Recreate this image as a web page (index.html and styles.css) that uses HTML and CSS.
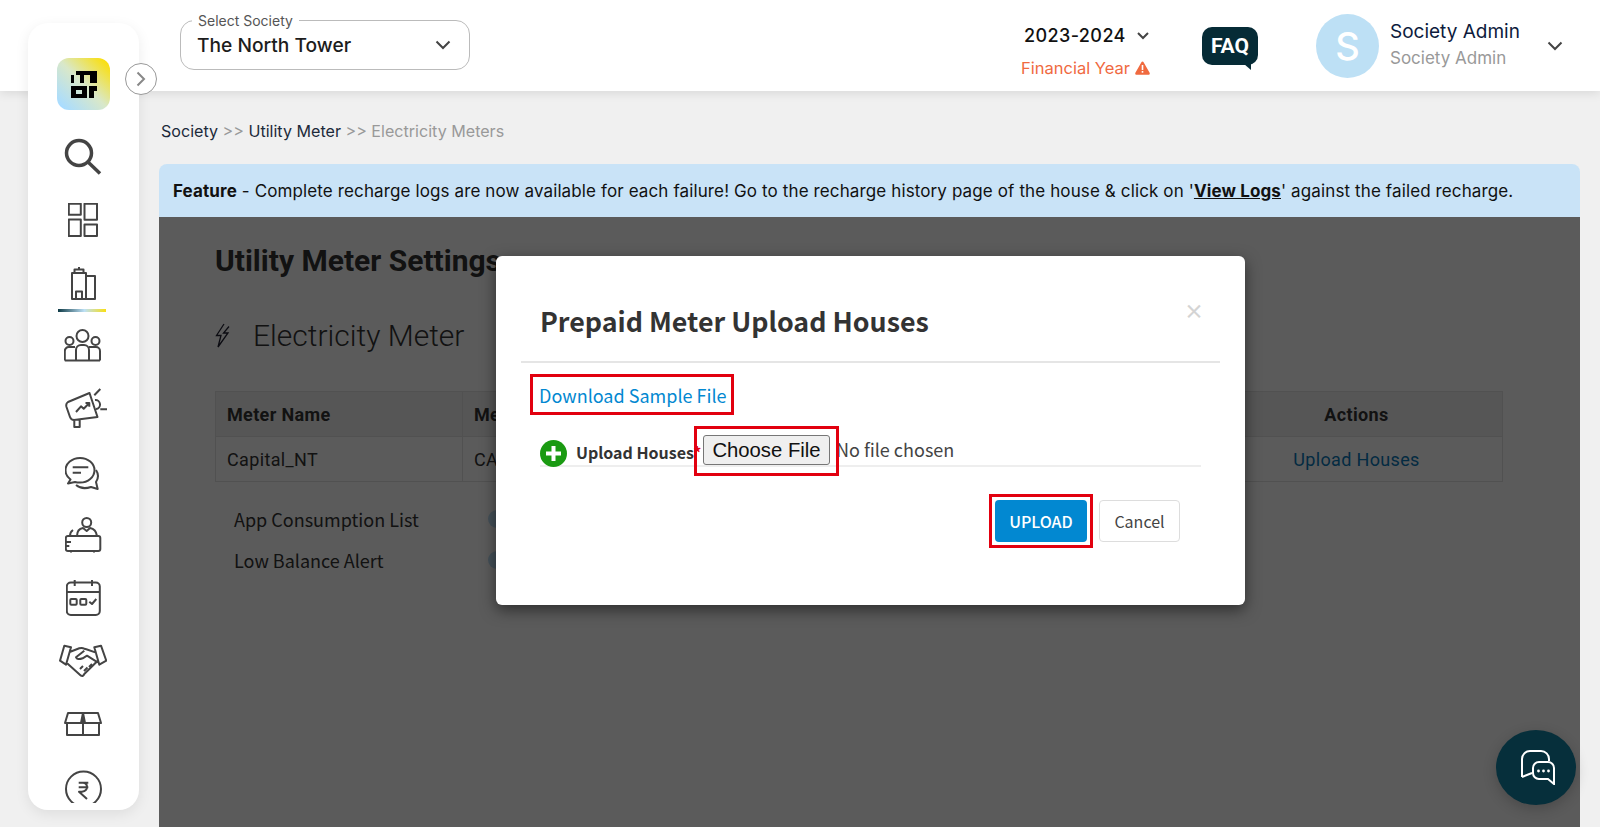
FILE: index.html
```html
<!DOCTYPE html>
<html lang="en">
<head>
    <meta charset="UTF-8">
    <meta name="viewport" content="width=device-width, initial-scale=1.0">
    <title>Electricity Meters</title>
    <link rel="stylesheet" href="styles.css">
</head>
<body>
    <div class="app">
        <!-- top bar -->
        <header class="topbar">
            <div class="society-select">
                <span class="society-label">Select Society</span>
                <span class="society-value">The North Tower</span>
                <svg class="chevron" width="16" height="10" viewBox="0 0 16 10"><path d="M1.5 1.5 8 8l6.5-6.5"/></svg>
            </div>
            <div class="year-box">
                <div class="year-value">2023-2024
                    <svg class="chevron" width="12" height="8" viewBox="0 0 12 8"><path d="M1 1l5 5 5-5"/></svg>
                </div>
                <div class="year-note">Financial Year
                    <svg width="15" height="14" viewBox="0 0 15 14"><path class="warn" d="M7.5.5c.5 0 .9.3 1.1.7l6 10.6c.5.9-.1 2-1.100 2H1.500c-1 0-1.600-1.100-1.100-2l6-10.600c.2-.4.600-.7 1.100-.7z"/><rect x="6.700" y="4" width="1.600" height="5" fill="#fff"/><rect x="6.700" y="10" width="1.600" height="1.700" fill="#fff"/></svg>
                </div>
            </div>
            <div class="faq">FAQ</div>
            <div class="user">
                <div class="avatar">S</div>
                <div class="user-text">
                    <div class="user-name">Society Admin</div>
                    <div class="user-role">Society Admin</div>
                </div>
                <svg class="chevron" width="16" height="10" viewBox="0 0 16 10"><path d="M1.500 1.500 8 8l6.500-6.500"/></svg>
            </div>
        </header>

        <!-- side menu -->
        <aside class="sidebar">
            <div class="logo">
                <svg width="26" height="27" viewBox="0 0 26 27">
                    <rect x="0" y="4" width="3" height="8"/>
                    <rect x="5" y="0" width="21" height="4"/>
                    <rect x="9" y="4" width="4" height="8"/>
                    <rect x="19" y="4" width="7" height="8"/>
                    <path fill-rule="evenodd" d="M0 15h16v12H0zM5 19v4h6v-4z"/>
                    <path d="M18 15h8v5h-3v7h-5z"/>
                </svg>
            </div>
            <button class="side-toggle">
                <svg width="10" height="16" viewBox="0 0 10 16"><path d="M1.500 1.500 8 8l-6.500 6.500"/></svg>
            </button>
            <ul class="side-menu">
                <li><svg class="heavy" width="38" height="37" viewBox="0 0 38 37"><circle cx="15" cy="15" r="12.500"/><path d="M24 24l12 11.500"/></svg></li>
                <li><svg width="30" height="34" viewBox="0 0 30 34"><rect x=".8" y=".8" width="12" height="11"/><rect x="16.500" y=".8" width="12.500" height="16"/><rect x=".8" y="16.500" width="12" height="16.500"/><rect x="16.500" y="21.500" width="12.500" height="11.500"/></svg></li>
                <li class="active"><svg width="25" height="36" viewBox="0 0 25 36"><path d="M1 8h14v26H1zM3.500 8V4.500h9V8M8 4.500V2M15 11h9v23h-9M5 34v-7.500h6V34"/></svg></li>
                <li><svg width="38" height="33" viewBox="0 0 38 33"><circle cx="18.500" cy="7" r="6"/><circle cx="5.500" cy="12" r="4"/><circle cx="31.500" cy="12" r="4"/><path d="M.8 31.500V22a4 4 0 0 1 4-4H11M12 31.500V21a5 5 0 0 1 5-5h3a5 5 0 0 1 5 5v10.500M25 18h7a4 4 0 0 1 4 4v9.500M.8 31.500H36"/></svg></li>
                <li class="shift-right"><svg width="43" height="41" viewBox="0 0 43 41"><path d="M3 14L24.500 5l8 24L9 32q-3 0-4-3L1.500 19Q.5 15.500 3 14zM9.300 32.300V39h5.400v-7.300M11 24l5-5.700 2.700 2.400L24.300 15M20.500 15h3.800v3.800M30 12a4.500 4.500 0 0 1 1 9M29.300 7.300 35.300 1M35.300 21.300H42"/></svg></li>
                <li class="nudge"><svg width="36" height="35" viewBox="0 0 36 35"><path d="M15 1C7 1 .5 6.500.5 13.300c0 3.800 2 7 5 9.200L3 26.500l7-1.500c1.500.4 3.200.6 5 .6 8 0 14.500-5.500 14.500-12.300S23 1 15 1z"/><path d="M7.700 10.300h15.600M7.700 15.700H16M31 13q4 6 0 12l1.700 7-6.700-2q-9 3-15-2"/></svg></li>
                <li><svg width="37" height="36" viewBox="0 0 37 36"><circle cx="21.700" cy="5.500" r="4.500"/><path d="M12 19q0-7 6-8l3.700 3 3.300-3q6 1 7 8M5 19q0-4 3-6"/><rect x=".8" y="19" width="34.500" height="15" rx="2"/><path d="M.8 25H6M.8 29h3.500M6 34v1.500M29 34v1.500"/></svg></li>
                <li><svg width="35" height="37" viewBox="0 0 35 37"><rect x=".8" y="3.500" width="33" height="32.500" rx="4"/><path d="M.8 13h33M8.700 1v6M26 1v6M23.300 22.700l2.700 2.300 4.300-5"/><rect x="4.300" y="20" width="6.400" height="5.700" rx="1"/><rect x="14.300" y="20" width="6" height="5.700" rx="1"/></svg></li>
                <li><svg width="48" height="34" viewBox="0 0 48 34"><path d="M5.300 1.700 12 3.300 7 20.700 1 16.700zM42 1.700l-6.700 1.600 5 17.400 7-4zM11.300 7.700l9-3.400q3-1 5 .4l2 .6 9.700 3.300M7 18.300l15 13.400q2 1 3.300-1.700L38.700 16.700M25.300 6.700 17 13.300q1 3 6.700 1L28 11.700l10.700 6.600M21 25l3-3M25 27l3.500-3.500M30 23l3-3"/></svg></li>
                <li><svg width="38" height="24" viewBox="0 0 38 24"><path d="M1 11 4 1h30l3 10zM3 11v12h32V11M19 1v22"/><path class="fill" d="M19 1l-2 10h4z"/></svg></li>
                <li><svg width="37" height="33" viewBox="0 0 37 33"><circle cx="18.500" cy="19" r="17.500"/><path d="M13.700 12.700h9.600M13.700 17.300h9.600M13.700 12.700H18q4 .3 4 4.300t-5 4.700h-3l8 7.300"/></svg></li>
            </ul>
        </aside>

        <main class="content">
            <div class="breadcrumb">
                <span class="crumb">Society</span> &gt;&gt; <span class="crumb">Utility Meter</span> &gt;&gt; Electricity Meters
            </div>
            <div class="feature">
                <b>Feature</b> - Complete recharge logs are now available for each failure! Go to the recharge history page of the house &amp; click on '<a href="#">View Logs</a>' against the failed recharge.
            </div>

            <section class="panel">
                <h1>Utility Meter Settings</h1>
                <h2>
                    <svg width="16" height="25" viewBox="0 0 16 25"><path d="M9 1 1.500 12.500H6L3 24l10-14H8.500L14 3.500"/></svg>
                    Electricity Meter
                </h2>
                <table>
                    <colgroup><col class="col-name"><col><col class="col-actions"></colgroup>
                    <thead>
                        <tr><th>Meter Name</th><th>Meter Type</th><th class="center">Actions</th></tr>
                    </thead>
                    <tbody>
                        <tr><td>Capital_NT</td><td>CAPITAL</td><td class="center"><a href="#">Upload Houses</a></td></tr>
                    </tbody>
                </table>
                <div class="setting"><span>App Consumption List</span><i class="switch"></i></div>
                <div class="setting"><span>Low Balance Alert</span><i class="switch"></i></div>

                <!-- upload dialog -->
                <div class="backdrop">
                    <div class="modal">
                        <div class="modal-head">
                            <h3>Prepaid Meter Upload Houses</h3>
                            <span class="close">&times;</span>
                        </div>
                        <div class="modal-body">
                            <a href="#" class="sample-link mark">Download Sample File</a>
                            <div class="file-row">
                                <span class="plus">
                                    <svg width="15" height="15" viewBox="0 0 15 15"><path d="M5.500 0h4v5.500H15v4H9.500V15h-4V9.500H0v-4h5.500z"/></svg>
                                </span>
                                <span class="file-label">Upload Houses<em>*</em></span>
                                <button class="file-btn mark">Choose File</button>
                                <span class="file-name">No file chosen</span>
                            </div>
                            <div class="modal-actions">
                                <button class="btn-upload mark">UPLOAD</button>
                                <button class="btn-cancel">Cancel</button>
                            </div>
                        </div>
                    </div>
                </div>
            </section>
        </main>

        <button class="chat-fab">
            <svg width="36" height="35" viewBox="0 0 36 35">
                <path d="M1 27V9a8 8 0 0 1 8-8h11a8 8 0 0 1 8 8v2M1 27l10-4"/>
                <path d="M18 12h9a6 6 0 0 1 6 6v16l-6-5h-9a6 6 0 0 1-6-6v-5a6 6 0 0 1 6-6z"/>
                <circle class="dot" cx="17.500" cy="21" r="1.400"/><circle class="dot" cx="22.500" cy="21" r="1.400"/><circle class="dot" cx="27.500" cy="21" r="1.400"/>
            </svg>
        </button>
    </div>
</body>
</html>
```

FILE: styles.css
```css
* {
    box-sizing: border-box;
}

body {
    margin: 0;
    background: #f0f0f0;
    font-family: Inter, "Liberation Sans", sans-serif;
    color: #222;
    overflow: hidden;
}

.app {
    display: grid;
    grid-template-columns: 159px 1fr;
    grid-template-rows: 91px 736px;
    height: 827px;
    position: relative;
}

/* top bar */
.topbar {
    grid-column: 1 / -1;
    grid-row: 1;
    display: flex;
    align-items: center;
    padding-left: 180px;
    background: #fff;
    box-shadow: 0 2px 10px rgba(0, 0, 0, 0.1);
}

.chevron path,
.side-toggle path {
    fill: none;
    stroke: #444;
    stroke-width: 2;
}

.society-select {
    position: relative;
    display: flex;
    align-items: center;
    justify-content: space-between;
    width: 290px;
    height: 50px;
    margin-top: -1px;
    padding: 0 18px 0 16px;
    border: 1px solid #bbb;
    border-radius: 14px;
}

.society-label {
    position: absolute;
    top: -9px;
    left: 11px;
    padding: 0 6px;
    background: #fff;
    font-size: 14px;
    line-height: 17px;
    color: #555;
}

.society-value {
    font-size: 19.200px;
    font-weight: 500;
    color: #1c1c1c;
}

.year-box {
    flex: none;
    width: 130px;
    margin: 11px 0 0 551px;
}

.year-value {
    display: flex;
    align-items: center;
    gap: 11px;
    padding-left: 3px;
    font-size: 18px;
    line-height: 22px;
    font-weight: 500;
    letter-spacing: 0.4px;
    color: #111;
    white-space: nowrap;
}

.year-note {
    display: flex;
    align-items: center;
    gap: 5px;
    margin-top: 11px;
    font-size: 16.500px;
    line-height: 20px;
    color: #f06a3f;
    white-space: nowrap;
}

.warn {
    fill: #f06a3f;
}

.faq {
    position: relative;
    flex: none;
    width: 56px;
    height: 38px;
    margin-left: 51px;
    margin-top: 1px;
    border-radius: 10px;
    background: #062b36;
    color: #fff;
    font-family: Roboto, sans-serif;
    font-weight: 700;
    font-size: 21px;
    line-height: 38px;
    text-align: center;
}

.faq::after {
    content: "";
    position: absolute;
    right: 7px;
    bottom: -5px;
    border-top: 6px solid #062b36;
    border-left: 7px solid transparent;
}

.user {
    display: flex;
    align-items: center;
    margin-left: 58px;
}

.avatar {
    width: 63px;
    height: 64px;
    border-radius: 50%;
    background: #bde0f5;
    color: #fff;
    font-size: 38px;
    font-weight: 500;
    line-height: 64px;
    text-align: center;
}

.user-text {
    width: 168px;
    padding: 0 0 4px 11px;
}

.user-name {
    font-size: 19px;
    color: #0d1b3d;
}

.user-role {
    margin-top: 5px;
    font-size: 17px;
    color: #999;
}

/* side menu */
.sidebar {
    grid-column: 1;
    grid-row: 1 / 3;
    position: relative;
    width: 111px;
    height: 787px;
    margin: 23px 0 0 28px;
    padding-top: 35px;
    background: #fff;
    border-radius: 20px;
    box-shadow: 0 4px 14px rgba(0, 0, 0, 0.08);
}

.logo {
    display: flex;
    align-items: center;
    justify-content: center;
    width: 53px;
    height: 52px;
    margin: 0 0 15px 29px;
    border-radius: 12px;
    background: linear-gradient(45deg, #a9dcff 8%, #d9e8c9 50%, #f9df12 92%);
}

.side-toggle {
    position: absolute;
    top: 40px;
    left: 97px;
    display: flex;
    align-items: center;
    justify-content: center;
    width: 32px;
    height: 32px;
    padding: 0;
    border: 1px solid #999;
    border-radius: 50%;
    background: #fff;
}

.side-toggle path {
    stroke: #888;
}

.side-menu {
    list-style: none;
    margin: 0;
    padding: 0;
}

.side-menu li {
    position: relative;
    display: flex;
    align-items: center;
    justify-content: center;
    height: 63px;
    padding-right: 1px;
}

.side-menu li.shift-right {
    padding-left: 6px;
}

.side-menu li.nudge {
    padding-top: 5px;
}

.side-menu svg {
    fill: none;
    stroke: #444;
    stroke-width: 2;
    stroke-linejoin: round;
}

.side-menu svg.heavy {
    stroke-width: 3.500;
}

.side-menu svg .fill {
    fill: #444;
}

.side-menu li.active::after {
    content: "";
    position: absolute;
    left: 30px;
    bottom: 2px;
    width: 48px;
    height: 3px;
    background: linear-gradient(90deg, #0d3a46, #bde0f5 55%, #f9df12);
}

/* page */
.content {
    grid-column: 2;
    grid-row: 2;
    display: flex;
    flex-direction: column;
    padding-right: 20px;
    min-width: 0;
}

.breadcrumb {
    padding: 30px 0 0 2px;
    height: 73px;
    font-size: 16.100px;
    line-height: 20px;
    color: #999;
}

.crumb {
    color: #1c2a3a;
}

.feature {
    height: 53px;
    padding: 17px 14px 0;
    border-radius: 8px 8px 0 0;
    background: #c9e3f7;
    font-size: 17px;
    line-height: 20px;
    letter-spacing: 0.12px;
    color: #111;
    white-space: nowrap;
}

.feature a {
    font-weight: 700;
    color: #111;
}

.panel {
    position: relative;
    flex: 1;
    padding: 26px 77px 0 56px;
    background: #fff;
    overflow: hidden;
}

h1 {
    margin: 0;
    font-family: Roboto, sans-serif;
    font-size: 30px;
    font-weight: 700;
    line-height: 36px;
    color: #333;
}

h2 {
    display: flex;
    align-items: center;
    gap: 22px;
    height: 40px;
    margin: 36px 0 0;
    font-family: Roboto, sans-serif;
    font-size: 30px;
    font-weight: 300;
    color: #333;
}

h2 svg {
    fill: none;
    stroke: #223;
    stroke-width: 1.300;
}

table {
    width: 100%;
    margin-top: 36px;
    border-collapse: collapse;
    table-layout: fixed;
    font-family: Roboto, sans-serif;
    font-size: 18px;
    letter-spacing: 0.35px;
    color: #333;
}

.col-name {
    width: 247px;
}

.col-actions {
    width: 292px;
}

th,
td {
    height: 45px;
    padding: 0 11px;
    border: 1px solid #e3e3e3;
    text-align: left;
}

th {
    background: #f2f2f2;
    font-weight: 700;
}

th.center,
td.center {
    text-align: center;
}

td a {
    color: #0a78b8;
    text-decoration: none;
}

.setting {
    display: flex;
    align-items: center;
    height: 41px;
    padding-left: 19px;
    font-family: "Noto Sans CJK JP", sans-serif;
    font-size: 18px;
    color: #333;
}

table + .setting {
    margin-top: 16px;
}

.setting span {
    width: 254px;
}

.switch {
    width: 40px;
    height: 18px;
    border-radius: 9px;
    background: #bfe0f5;
}

.backdrop {
    position: absolute;
    inset: 0;
    display: flex;
    justify-content: center;
    align-items: flex-start;
    padding: 39px 0 0 2px;
    background: rgba(0, 0, 0, 0.645);
}

/* dialog */
.modal {
    width: 749px;
    height: 349px;
    padding: 0 25px;
    border-radius: 6px;
    background: #fff;
    box-shadow: 0 5px 15px rgba(0, 0, 0, 0.5);
    font-family: "Noto Sans CJK JP", sans-serif;
}

.modal-head {
    display: flex;
    justify-content: space-between;
    height: 107px;
    padding: 45px 16px 0 19px;
    border-bottom: 2px solid #e5e5e5;
}

h3 {
    margin: 0;
    font-size: 26.800px;
    font-weight: 700;
    line-height: 40px;
    color: #333;
}

.close {
    margin-top: -10px;
    font-size: 20px;
    line-height: 40px;
    font-weight: 700;
    color: #d4d4d4;
}

.modal-body {
    padding: 0 19px;
}

.mark {
    position: relative;
}

.mark::after {
    content: "";
    position: absolute;
    border: 3px solid #e2000f;
    pointer-events: none;
}

.sample-link {
    display: inline-block;
    margin: 18px 0 0 -1px;
    font-size: 18px;
    line-height: 28px;
    color: #0288d1;
    text-decoration: none;
}

.sample-link::after {
    inset: -7px -8px -6px -9px;
}

.file-row {
    display: flex;
    align-items: flex-end;
    height: 39px;
    width: 661px;
    margin: 19px 0 0;
    border-bottom: 2px solid #eee;
}

.plus {
    display: flex;
    align-items: center;
    justify-content: center;
    flex: none;
    width: 27px;
    height: 27px;
    margin-bottom: -2px;
    border-radius: 50%;
    background: #1a9a12;
}

.plus path {
    fill: #fff;
}

.file-label {
    width: 127px;
    margin: 0 0 2px 9px;
    font-size: 16px;
    font-weight: 700;
    line-height: 22px;
    color: #333;
    white-space: nowrap;
}

.file-label em {
    font-style: normal;
    color: #e2000f;
}

.file-btn {
    width: 127px;
    height: 30px;
    padding: 0;
    border: 1px solid #767676;
    border-radius: 3px;
    background: #efefef;
    font-family: "Liberation Sans", sans-serif;
    font-size: 20.300px;
    color: #111;
}

.file-btn::after {
    inset: -10px -10px -12px -10px;
}

.file-name {
    margin: 0 0 3px 6px;
    font-size: 18px;
    line-height: 26px;
    color: #444;
}

.modal-actions {
    display: flex;
    justify-content: flex-end;
    gap: 12px;
    margin: 33px 21px 0 0;
}

.modal-actions button {
    height: 42px;
    border-radius: 4px;
    font-family: "Noto Sans CJK JP", sans-serif;
    font-size: 16px;
}

.btn-upload {
    width: 92px;
    padding: 0;
    border: none;
    background: #0288d1;
    color: #fff;
    font-weight: 500;
}

.btn-upload::after {
    inset: -6px -6px -6px -6px;
}

.btn-cancel {
    width: 81px;
    padding: 0;
    border: 1px solid #ddd;
    background: #fff;
    color: #444;
}

.chat-fab {
    position: absolute;
    left: 1496px;
    top: 730px;
    display: flex;
    align-items: center;
    justify-content: center;
    width: 80px;
    height: 75px;
    padding: 0 0 0 5px;
    border: none;
    border-radius: 50%;
    background: #062f3b;
    box-shadow: 0 4px 14px rgba(0, 0, 0, 0.2);
}

.chat-fab svg {
    fill: none;
    stroke: #fff;
    stroke-width: 2;
}

.chat-fab .dot {
    fill: #fff;
    stroke: none;
}
```
